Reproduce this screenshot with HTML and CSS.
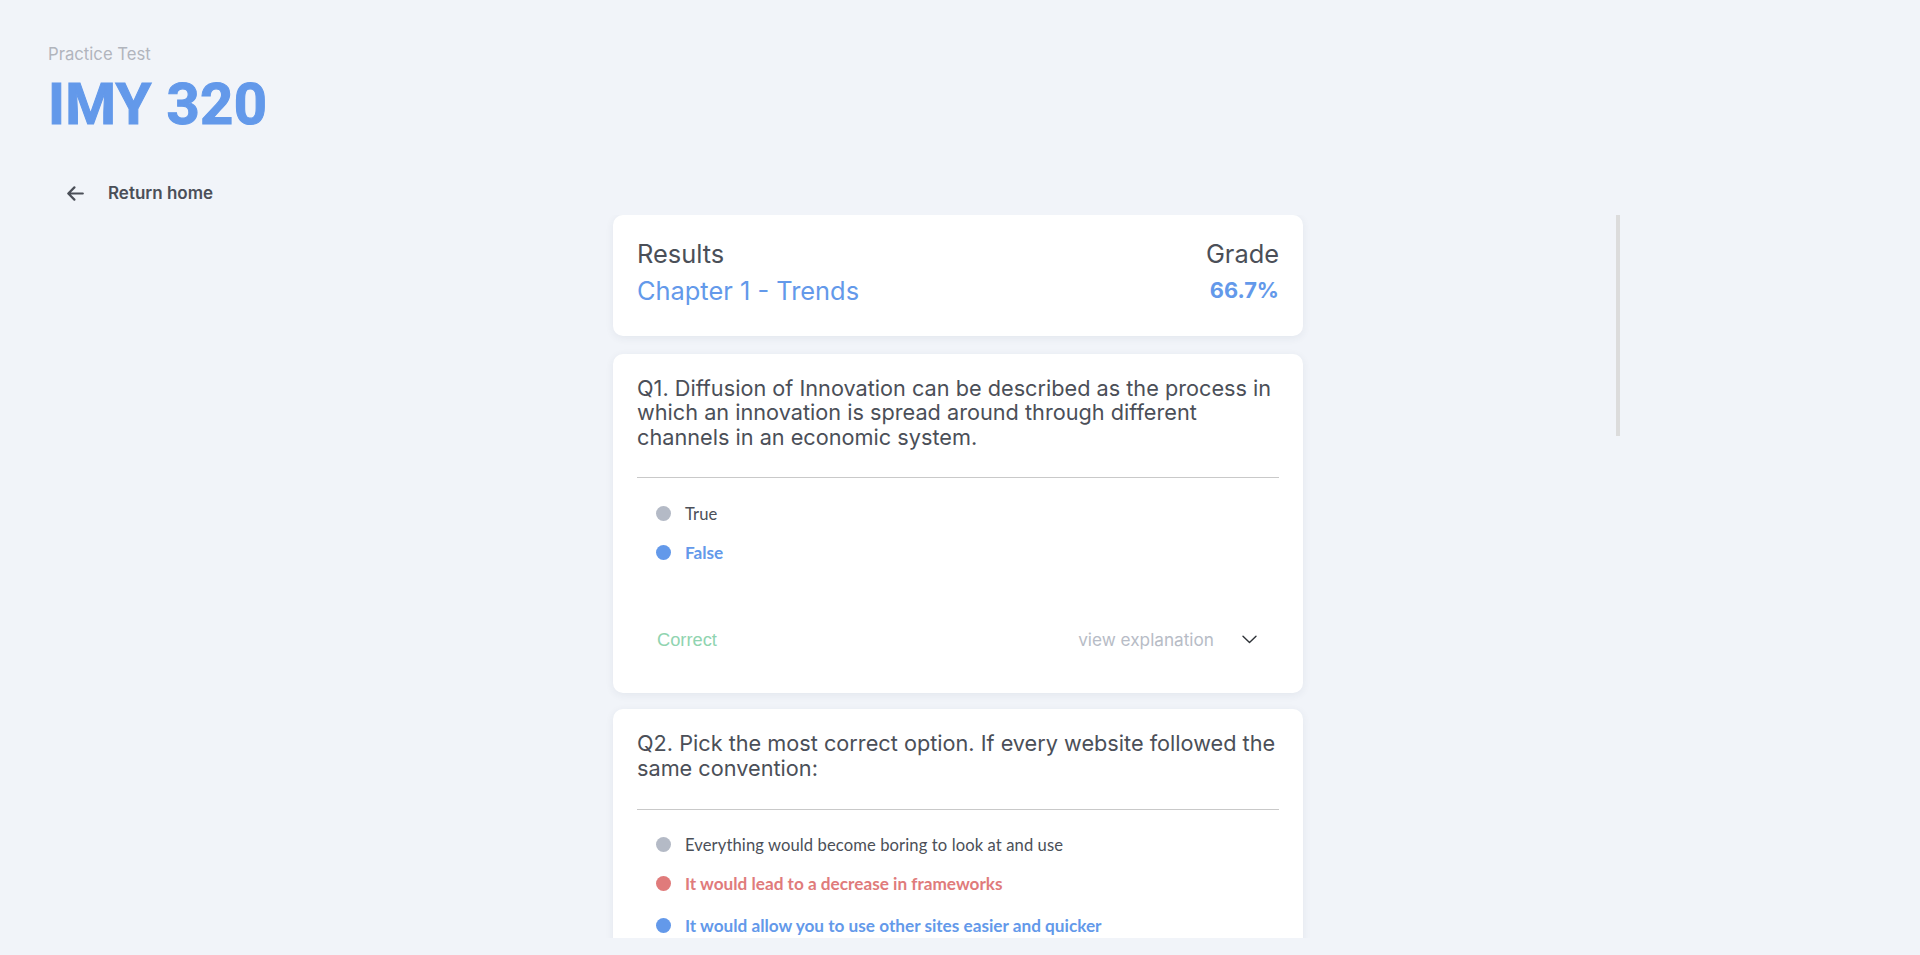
FILE: index.html
```html
<!DOCTYPE html>
<html lang="en">
<head>
<meta charset="utf-8">
<title>IMY 320 - Practice Test</title>
<link rel="stylesheet" href="styles.css">
</head>
<body>
<header class="header">
  <div class="subtitle">Practice Test</div>
  <h1 class="title">IMY 320</h1>
  <a class="back" href="#">
    <svg class="back-icon" width="17" height="15" viewBox="0 0 17 15" fill="none" stroke="currentColor" stroke-width="2.2" stroke-linecap="round" stroke-linejoin="round"><path d="M15.8 7.5H1.6M7.4 1.4L1.3 7.5L7.4 13.6"/></svg>
    <span>Return home</span>
  </a>
</header>

<div class="scroll-area">
  <main class="viewport">
    <div class="list">
      <section class="card results">
        <div class="results-row">
          <span class="label">Results</span>
          <span class="label">Grade</span>
        </div>
        <div class="results-row">
          <span class="chapter">Chapter 1 - Trends</span>
          <span class="grade">66.7%</span>
        </div>
      </section>

      <section class="card question">
        <h2 class="q-title">Q1. Diffusion of Innovation can be described as the process in which an innovation is spread around through different channels in an economic system.</h2>
        <hr class="divider">
        <ul class="options">
          <li class="option"><span class="dot"></span><span class="opt-text">True</span></li>
          <li class="option correct"><span class="dot"></span><span class="opt-text">False</span></li>
        </ul>
        <div class="q-footer">
          <span class="status">Correct</span>
          <span class="explain">view explanation
            <svg class="chevron" width="15" height="9" viewBox="0 0 15 9" fill="none" stroke="#2f3338" stroke-width="1.4" stroke-linecap="round" stroke-linejoin="round"><path d="M1 1.2L7.5 7.6L14 1.2"/></svg>
          </span>
        </div>
      </section>

      <section class="card question">
        <h2 class="q-title">Q2. Pick the most correct option. If every website followed the same convention:</h2>
        <hr class="divider">
        <ul class="options">
          <li class="option"><span class="dot"></span><span class="opt-text">Everything would become boring to look at and use</span></li>
          <li class="option wrong"><span class="dot"></span><span class="opt-text">It would lead to a decrease in frameworks</span></li>
          <li class="option correct"><span class="dot"></span><span class="opt-text">It would allow you to use other sites easier and quicker</span></li>
        </ul>
        <div class="q-footer">
          <span class="status incorrect">Incorrect</span>
          <span class="explain">view explanation
            <svg class="chevron" width="15" height="9" viewBox="0 0 15 9" fill="none" stroke="#2f3338" stroke-width="1.4" stroke-linecap="round" stroke-linejoin="round"><path d="M1 1.2L7.5 7.6L14 1.2"/></svg>
          </span>
        </div>
      </section>
    </div>
  </main>
  <div class="track"><div class="thumb"></div></div>
</div>
</body>
</html>
```
FILE: styles.css
```css
* { box-sizing: border-box; }

html, body {
  margin: 0;
  height: 100%;
  overflow: hidden;
}

body {
  background: #f1f4f9;
  font-family: "Inter", "Noto Sans", sans-serif;
  color: #4b4f58;
}

.header {
  padding: 44px 0 0 48px;
}

.subtitle {
  font-size: 16.7px;
  line-height: 20px;
  color: #b1b5bd;
}

.title {
  margin: 11px 0 0;
  font-family: "Roboto", "Liberation Sans", sans-serif;
  font-weight: 700;
  font-size: 58px;
  line-height: 58px;
  color: #6399ea;
  letter-spacing: 0.3px;
  -webkit-text-stroke: 1.1px #6399ea;
}

.back {
  display: inline-flex;
  align-items: center;
  gap: 24px;
  height: 24px;
  margin: 48px 0 0 19px;
  color: #4b4f58;
  text-decoration: none;
  font-size: 17px;
  font-weight: 600;
}

.back-icon {
  display: block;
  color: #4b4f58;
}

.scroll-area {
  display: flex;
  width: 1320px;
  height: 723px;
  margin: 10px auto 0;
}

.viewport {
  flex: 1;
  overflow: hidden;
}

.track {
  width: 4px;
  flex: none;
}

.thumb {
  height: 221px;
  background: #dcdcdc;
}

.list {
  width: 690px;
  margin: 0 auto;
  display: flex;
  flex-direction: column;
  gap: 17.5px;
}

.list > .question + .question {
  margin-top: -1px;
}

.card {
  background: #ffffff;
  border-radius: 10px;
  box-shadow: 0 2px 8px rgba(40, 60, 90, 0.07);
}

.results {
  height: 121px;
  padding: 23px 24px 0;
}

.results-row {
  display: flex;
  justify-content: space-between;
  align-items: center;
  height: 30px;
}

.results-row + .results-row {
  margin-top: 7px;
}

.label {
  font-size: 25.4px;
  color: #4b4f58;
}

.chapter {
  font-size: 25.4px;
  color: #6399ea;
}

.grade {
  font-size: 21.8px;
  font-weight: 700;
  color: #6399ea;
}

.question {
  padding: 22px 24px 33.2px;
}

.q-title {
  margin: 0;
  font-size: 21.7px;
  line-height: 24.5px;
  font-weight: 400;
  color: #4b4f58;
}

.divider {
  margin: 28.4px 0 0;
  border: 0;
  border-top: 1px solid #c9c9c9;
  height: 0;
}

.options {
  list-style: none;
  margin: 0;
  padding: 15.7px 0 0 19px;
}

.option {
  display: flex;
  align-items: center;
  height: 39px;
  gap: 14px;
  font-family: "Lato", "Open Sans", sans-serif;
  font-size: 16.6px;
  letter-spacing: 0.1px;
  color: #4b4f58;
}

.option + .option + .option {
  height: 42px;
  padding-top: 3px;
}

.dot {
  width: 15px;
  height: 15px;
  border-radius: 50%;
  background: #b4bac6;
  flex: none;
}

.option.correct,
.option.wrong {
  font-weight: 700;
  font-size: 17.2px;
  letter-spacing: 0;
}

.option.correct { color: #6399ea; }
.option.correct .dot { background: #6399ea; }
.option.wrong { color: #e07b7b; }
.option.wrong .dot { background: #e07b7b; }

.q-footer {
  display: flex;
  justify-content: space-between;
  align-items: center;
  height: 40px;
  margin-top: 47.5px;
  padding: 0 22px 0 20px;
}

.status {
  font-family: "Liberation Sans", Arial, sans-serif;
  font-size: 18.3px;
  color: #90d4b0;
}

.status.incorrect {
  color: #e07b7b;
}

.explain {
  display: inline-flex;
  align-items: center;
  gap: 28px;
  font-size: 17.2px;
  color: #b7bcc6;
}

.chevron {
  display: block;
}
```
